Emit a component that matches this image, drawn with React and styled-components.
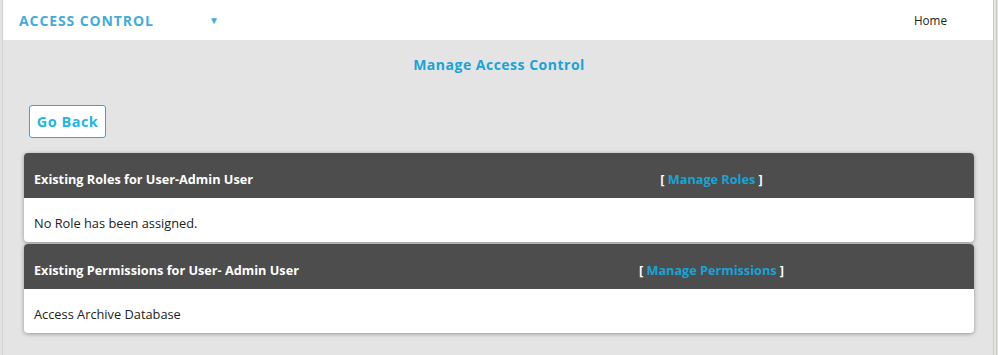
import React from "react"
import styled, { createGlobalStyle } from "styled-components"

const Global = createGlobalStyle`
  html, body {
    margin: 0;
    padding: 0;
    background: #e4e4e4;
  }
  body {
    font-family: "Open Sans", "Liberation Sans", sans-serif;
  }
`

const Page = styled("div")`
  display: flex;
  height: 355px;
  background: #e4e4e4;
`
const LeftGutter = styled("div")`
  width: 2px;
  background: #e2e2e2;
  border-right: 1px solid #d2d2d2;
`
const RightGutter = styled("div")`
  width: 4px;
  display: flex;
  justify-content: center;
  &::before {
    content: "";
    width: 1px;
    background: #cbc8c0;
  }
`
const Main = styled("div")`
  width: 990px;
  border-right: 1px solid #c9c9c9;
  display: flex;
  flex-direction: column;
`
const TopBar = styled("div")`
  height: 40px;
  background: #fff;
  display: flex;
  align-items: center;
  padding-left: 16px;
`
const Brand = styled("div")`
  font-weight: 700;
  font-size: 14px;
  letter-spacing: 0.9px;
  color: #45acd9;
  width: 190px;
`
const Caret = styled("span")`
  font-size: 10px;
  color: #45acd9;
`
const NavLink = styled("a")`
  margin-left: auto;
  margin-right: 46px;
  font-size: 11.7px;
  color: #222;
  text-decoration: none;
`
const Content = styled("div")`
  padding: 16px 19px 0 21px;
  display: flex;
  flex-direction: column;
`
const Title = styled("h2")`
  margin: 0;
  text-align: center;
  font-size: 14px;
  letter-spacing: 0.5px;
  font-weight: 700;
  color: #1ba3d6;
  line-height: 18px;
`
const BackButton = styled("button")`
  align-self: flex-start;
  margin: 31px 0 15px 5px;
  height: 33px;
  width: 77px;
  padding: 0;
  background: #fff;
  border: 1px solid #1ab0e2;
  border-radius: 3px;
  font-family: inherit;
  font-weight: 700;
  font-size: 14.5px;
  letter-spacing: 0.5px;
  color: #1fb6ea;
`
const Panel = styled("div")`
  background: #fff;
  border-radius: 4px;
  box-shadow: 0 1px 4px rgba(0, 0, 0, 0.35);
  overflow: hidden;
  margin-bottom: 2px;
`
const PanelHead = styled("div")`
  height: 45px;
  background: #4d4d4d;
  display: grid;
  grid-template-columns: 425px 1fr;
  align-items: center;
  padding-top: 6px;
  box-sizing: border-box;
`
const PanelTitle = styled("div")`
  padding-left: 10px;
  font-weight: 700;
  font-size: 12.7px;
  color: #fff;
`
const PanelAction = styled("div")`
  text-align: center;
  font-weight: 700;
  font-size: 12.7px;
  color: #fff;
  a {
    color: #1aa3d6;
    text-decoration: none;
  }
`
const PanelBody = styled("div")`
  height: 44px;
  display: flex;
  align-items: center;
  padding: 6px 0 0 10px;
  box-sizing: border-box;
  font-size: 12.8px;
  color: #222;
`

const AccessPanel = ({ title, action, children }) => (
  <Panel>
    <PanelHead>
      <PanelTitle>{title}</PanelTitle>
      <PanelAction>
        [ <a href="#">{action}</a> ]
      </PanelAction>
    </PanelHead>
    <PanelBody>{children}</PanelBody>
  </Panel>
)

const App = () => {
  return (
    <Page>
      <Global />
      <LeftGutter />
      <Main>
        <TopBar>
          <Brand>ACCESS CONTROL</Brand>
          <Caret>▼</Caret>
          <NavLink href="#">Home</NavLink>
        </TopBar>
        <Content>
          <Title>Manage Access Control</Title>
          <BackButton>Go Back</BackButton>
          <AccessPanel title="Existing Roles for User-Admin User" action="Manage Roles">
            No Role has been assigned.
          </AccessPanel>
          <AccessPanel title="Existing Permissions for User- Admin User" action="Manage Permissions">
            Access Archive Database
          </AccessPanel>
        </Content>
      </Main>
      <RightGutter />
    </Page>
  )
}

export default App
